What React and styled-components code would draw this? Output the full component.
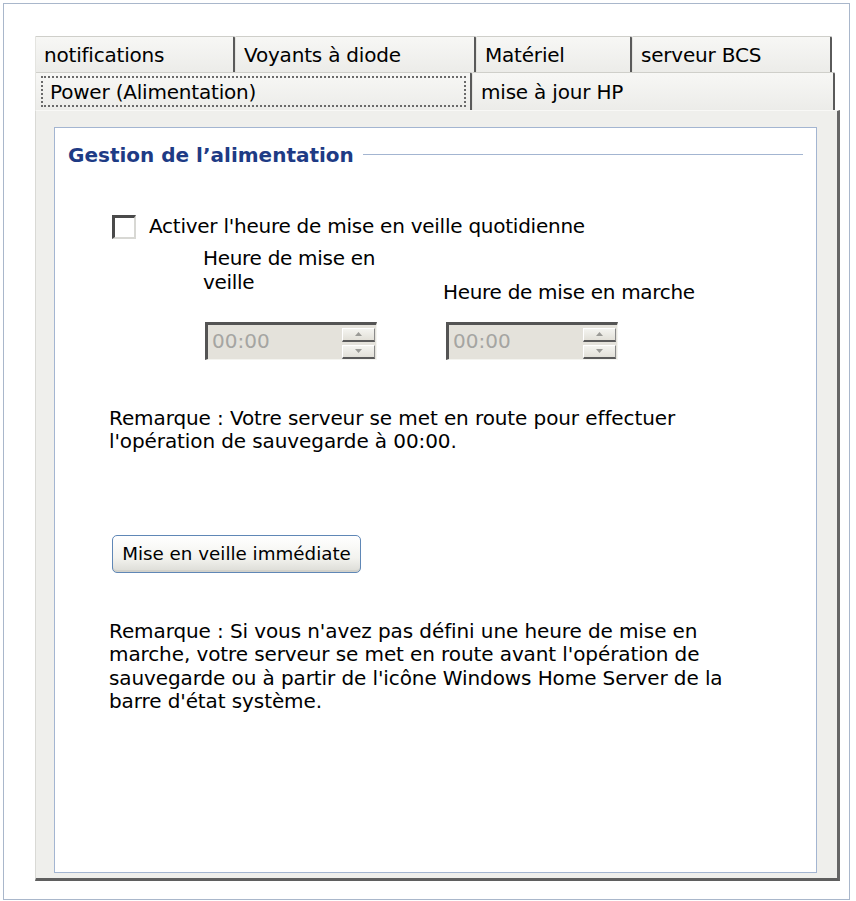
import React from 'react'
import styled, { createGlobalStyle } from 'styled-components'

const Global = createGlobalStyle`
  body {
    margin: 0;
    background: #fff;
    font-family: "DejaVu Sans", Verdana, sans-serif;
    font-size: 20px;
    color: #000;
  }
`

const Frame = styled.div`
  box-sizing: border-box;
  margin: 3px 0 0 3px;
  width: 847px;
  height: 897px;
  border: 1px solid #a9b7cb;
  padding: 32px 0 0 31px;
  background: #fff;
`

const Tabs = styled.div`
  display: flex;
  flex-direction: column;
  width: 805px;
`

const TabRow = styled.div`
  display: flex;
  height: ${p => p.h}px;
`

const Tab = styled.div`
  box-sizing: border-box;
  width: ${p => p.w}px;
  height: 100%;
  display: flex;
  align-items: center;
  padding: ${p => (p.active ? '3px 4px 3px 5px' : '0 6px 0 8px')};
  background: linear-gradient(#f7f7f5, #ecece9);
  border-top: 1px solid #cfcfca;
  border-left: 1px solid #e4e4e0;
  border-right: 2px solid #5a5a5a;
  border-top-right-radius: 2px;
  white-space: nowrap;
  letter-spacing: -0.2px;
`

const Focus = styled.div`
  box-sizing: border-box;
  flex: 1;
  height: 100%;
  display: flex;
  align-items: center;
  padding-left: 7px;
  border: 2px dotted #6a6a6a;
`

const Page = styled.div`
  box-sizing: border-box;
  height: 771px;
  padding: 16px 20px 5px 18px;
  background: #efefec;
  border-top: 1px solid #f8f8f6;
  border-left: 1px solid #d9d9d5;
  border-right: 3px solid #666;
  border-bottom: 3px solid #5f5f5f;
  display: flex;
`

const Group = styled.div`
  flex: 1;
  display: flex;
  flex-direction: column;
  background: #fff;
  border: 1px solid #a3b5d1;
  padding: 14px 13px 0 13px;
`

const Legend = styled.div`
  display: flex;
  align-items: center;
  gap: 9px;
`

const Title = styled.span`
  font-weight: bold;
  color: #1e3b85;
  line-height: 26px;
  white-space: nowrap;
`

const Rule = styled.div`
  flex: 1;
  height: 1px;
  margin-top: -2px;
  background: #a3b5d1;
`

const Body = styled.div`
  display: flex;
  flex-direction: column;
  align-items: flex-start;
  padding-left: 41px;
  line-height: 23.5px;
`

const CheckRow = styled.label`
  display: flex;
  align-items: center;
  gap: 13px;
  margin: 47px 0 0 3px;
  letter-spacing: -0.25px;
`

const CheckBox = styled.span`
  box-sizing: border-box;
  width: 24px;
  height: 24px;
  background: #fff;
  border-top: 3px solid #4a4a4a;
  border-left: 3px solid #4a4a4a;
  border-right: 2px solid #d8d8d4;
  border-bottom: 2px solid #d8d8d4;
`

const TimeGrid = styled.div`
  display: grid;
  grid-template-columns: 240px 240px;
  row-gap: 17px;
  margin: 8px 0 0 94px;
`

const FieldLabel = styled.div`
  padding-top: ${p => p.offset || 0}px;
  letter-spacing: -0.3px;
  white-space: nowrap;
`

const Spin = styled.div`
  box-sizing: border-box;
  width: 172px;
  height: 38px;
  margin-left: ${p => p.indent || 0}px;
  display: flex;
  align-items: center;
  justify-content: space-between;
  background: #e4e2db;
  border-top: 3px solid #545454;
  border-left: 3px solid #545454;
  border-right: 1px solid #f4f4f0;
  border-bottom: 1px solid #f4f4f0;
  padding: 0 1px 0 4px;
`

const SpinValue = styled.span`
  color: #a5a5a2;
`

const SpinButtons = styled.div`
  display: flex;
  flex-direction: column;
  gap: 3px;
  margin-top: 3px;
`

const SpinButton = styled.div`
  box-sizing: border-box;
  width: 33px;
  height: 14px;
  display: flex;
  align-items: center;
  justify-content: center;
  background: linear-gradient(#f4f4f0, #e2e0d8);
  border-bottom: 2px solid #5a5a5a;
  border-right: 1px solid #8a8a8a;
  border-top: 1px solid #fff;
  border-left: 1px solid #fff;
`

const Note = styled.p`
  margin: ${p => p.top}px 0 0 0;
  letter-spacing: -0.1px;
`

const Button = styled.button`
  box-sizing: border-box;
  margin: 81px 0 0 3px;
  width: 249px;
  height: 38px;
  font-family: inherit;
  font-size: 18.3px;
  color: #000;
  border: 1px solid #5f87b6;
  border-radius: 5px;
  background: linear-gradient(#ffffff, #f3f3ef 60%, #dcdcd6);
  box-shadow: inset 0 -2px 0 #d2d2cc;
  padding: 0;
`

function Arrow({ up }) {
  return (
    <svg width="7" height="4" viewBox="0 0 7 4">
      <path d={up ? 'M0 4 L3.5 0 L7 4 Z' : 'M0 0 L3.5 4 L7 0 Z'} fill="#9a9a96" />
    </svg>
  )
}

function TimeSpin({ value, indent }) {
  return (
    <Spin indent={indent}>
      <SpinValue>{value}</SpinValue>
      <SpinButtons>
        <SpinButton><Arrow up /></SpinButton>
        <SpinButton><Arrow /></SpinButton>
      </SpinButtons>
    </Spin>
  )
}

export default function App() {
  return (
    <>
      <Global />
      <Frame>
        <Tabs>
          <TabRow h={36}>
            <Tab w={200}>notifications</Tab>
            <Tab w={241}>Voyants à diode</Tab>
            <Tab w={156}>Matériel</Tab>
            <Tab w={200}>serveur BCS</Tab>
          </TabRow>
          <TabRow h={38}>
            <Tab w={437} active><Focus>Power (Alimentation)</Focus></Tab>
            <Tab w={363}>mise à jour HP</Tab>
          </TabRow>
          <Page>
            <Group>
              <Legend>
                <Title>Gestion de l’alimentation</Title>
                <Rule />
              </Legend>
              <Body>
                <CheckRow>
                  <CheckBox />
                  <span>Activer l'heure de mise en veille quotidienne</span>
                </CheckRow>
                <TimeGrid>
                  <FieldLabel>Heure de mise en<br />veille</FieldLabel>
                  <FieldLabel offset={34}>Heure de mise en marche</FieldLabel>
                  <TimeSpin value="00:00" indent={2} />
                  <TimeSpin value="00:00" indent={3} />
                </TimeGrid>
                <Note top={47}>
                  Remarque : Votre serveur se met en route pour effectuer<br />
                  l'opération de sauvegarde à 00:00.
                </Note>
                <Button>Mise en veille immédiate</Button>
                <Note top={47}>
                  Remarque : Si vous n'avez pas défini une heure de mise en<br />
                  marche, votre serveur se met en route avant l'opération de<br />
                  sauvegarde ou à partir de l'icône Windows Home Server de la<br />
                  barre d'état système.
                </Note>
              </Body>
            </Group>
          </Page>
        </Tabs>
      </Frame>
    </>
  )
}
